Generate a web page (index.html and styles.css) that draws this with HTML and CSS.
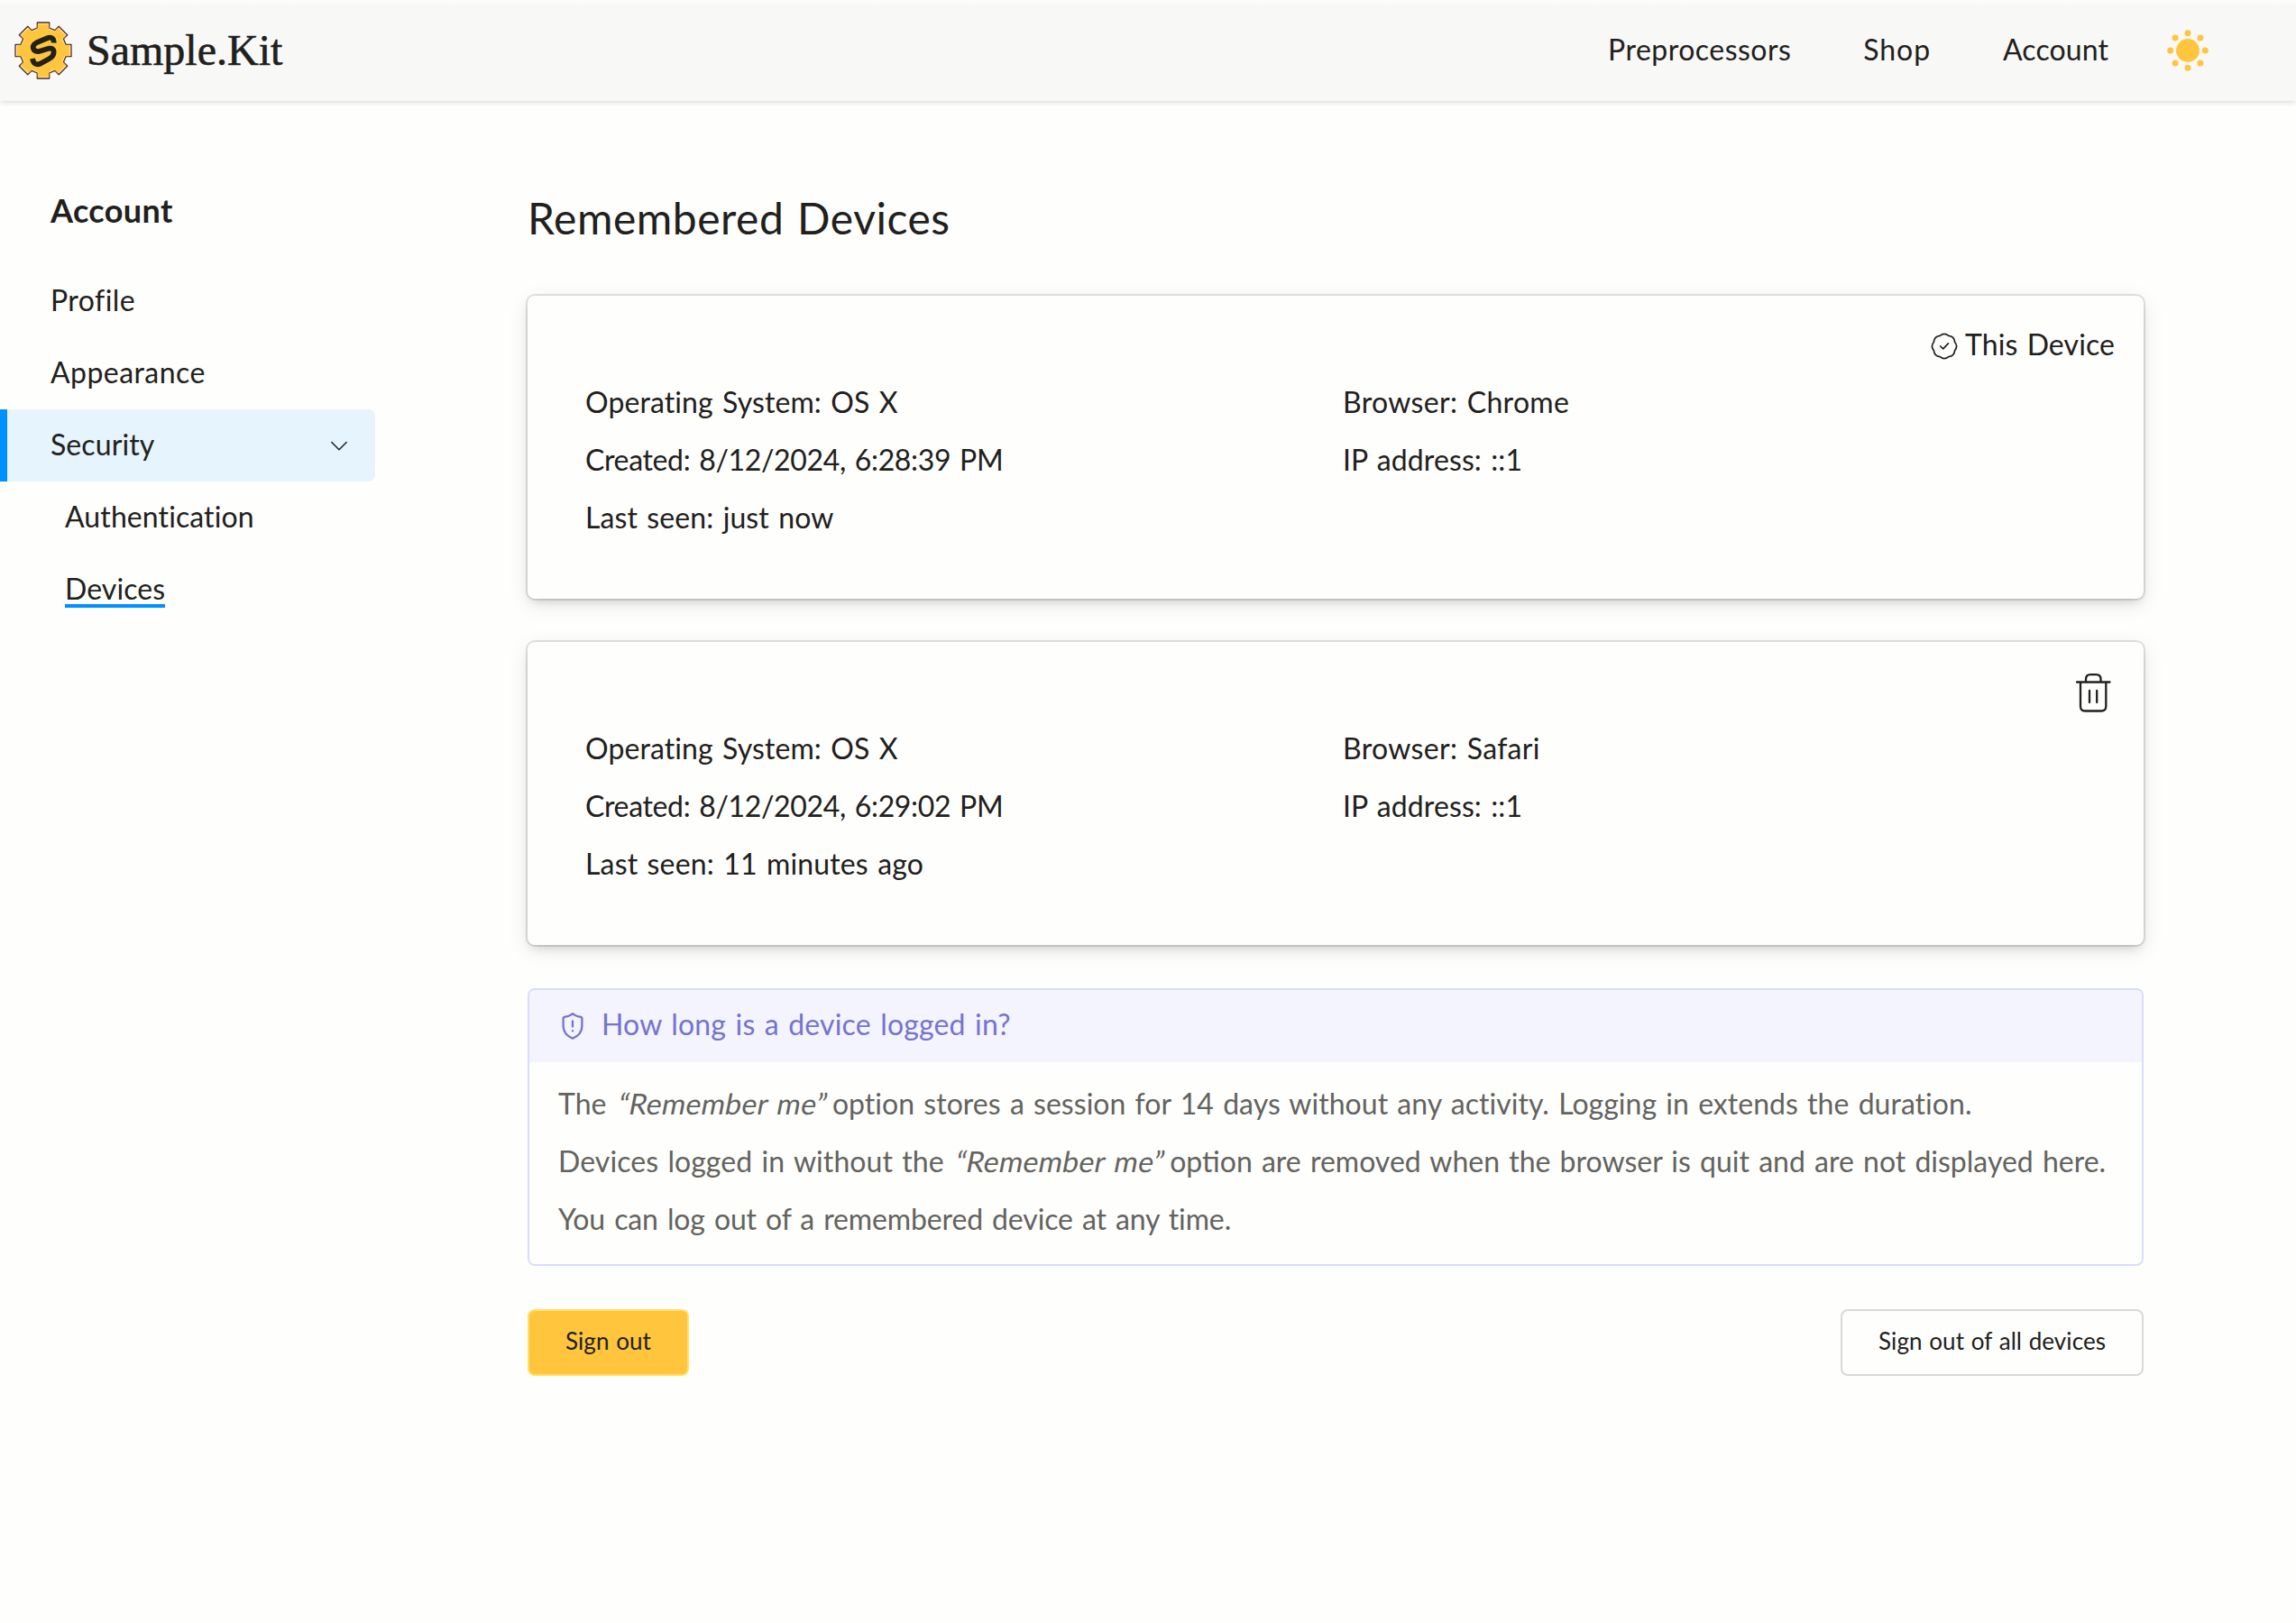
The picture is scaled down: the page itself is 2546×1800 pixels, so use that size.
FILE: index.html
```html
<!DOCTYPE html>
<html lang="en">
<head>
<meta charset="utf-8">
<title>Remembered Devices – Sample.Kit</title>
<link rel="stylesheet" href="styles.css">
</head>
<body>
<header class="topbar">
  <a class="brand">
    <svg class="brand-logo" viewBox="-32 -32 64 64">
      <defs><polygon id="gear" points="-6.7,-25 -6.7,-31 6.7,-31 6.7,-25 12.9,-22.4 17.2,-26.7 26.7,-17.2 22.4,-12.9 25,-6.7 31,-6.7 31,6.7 25,6.7 22.4,12.9 26.7,17.2 17.2,26.7 12.9,22.4 6.7,25 6.7,31 -6.7,31 -6.7,25 -12.9,22.4 -17.2,26.7 -26.7,17.2 -22.4,12.9 -25,6.7 -31,6.7 -31,-6.7 -25,-6.7 -22.4,-12.9 -26.7,-17.2 -17.2,-26.7 -12.9,-22.4"/></defs>
      <use href="#gear" fill="#ffe9c0" stroke="#4b2f22" stroke-width="1.3" stroke-linejoin="round"/>
      <use href="#gear" fill="#ffc53d" transform="scale(.94)"/>
      <path d="M11.6-8.500Q12-15.500 5-14L-7-9Q-13.5-5.500-10.200-.5Q-7.500 2-3 .6L5-2Q12.500-3.500 11.500 3Q11 7 6 9.500L-3 14.500Q-10.500 17.500-12 9" fill="none" stroke="#21201c" stroke-width="5.800"/>
    </svg>
    <span class="brand-name">Sample.Kit</span>
  </a>
  <nav class="topnav">
    <a class="nav-pre">Preprocessors</a>
    <a class="nav-shop">Shop</a>
    <a>Account</a>
    <svg class="sun" viewBox="-24 -24 48 48" fill="#ffc53d">
      <circle r="12.900"/>
      <circle cy="-19.300" r="3.500"/><circle cy="19.300" r="3.500"/><circle cx="-19.300" r="3.500"/><circle cx="19.300" r="3.500"/>
      <circle cx="13.900" cy="-13.900" r="3.500"/><circle cx="13.900" cy="13.900" r="3.500"/><circle cx="-13.900" cy="13.900" r="3.500"/><circle cx="-13.900" cy="-13.900" r="3.500"/>
    </svg>
  </nav>
</header>
<div class="layout">
  <aside class="sidebar">
    <h2>Account</h2>
    <a class="item wide">Profile</a>
    <a class="item wide">Appearance</a>
    <a class="item active">Security
      <svg class="chevron" viewBox="0 0 20 12" fill="none" stroke="#21201c" stroke-width="1.500" stroke-linecap="round" stroke-linejoin="round"><path d="M1.800 1.500 10 9.700 18.200 1.500"/></svg>
    </a>
    <a class="item sub">Authentication</a>
    <a class="item sub"><span class="current">Devices</span></a>
  </aside>
  <main class="content">
    <h1>Remembered Devices</h1>
    <section class="card">
      <div class="card-top">
        <svg class="badge" viewBox="-16 -16 32 32" fill="none" stroke="#21201c" stroke-width="1.700" stroke-linecap="round" stroke-linejoin="round"><path d="M-4.800-11.600Q0-15.600 4.800-11.600Q11-11 11.600-4.800Q15.600 0 11.600 4.800Q11 11 4.800 11.600Q0 15.600-4.800 11.600Q-11 11-11.600 4.800Q-15.600 0-11.600-4.800Q-11-11-4.800-11.600Z"/><path d="M-4.300 0-1.300 2.900 4.400-3.100"/></svg>
        <span>This Device</span>
      </div>
      <div class="facts">
        <div><p>Operating System: OS X</p><p class="stamp">Created: 8/12/2024, 6:28:39 PM</p><p>Last seen: just now</p></div>
        <div><p class="browser">Browser: Chrome</p><p>IP address: ::1</p></div>
      </div>
    </section>
    <section class="card">
      <div class="card-top">
        <svg class="trash" viewBox="0 0 48 48" fill="none" stroke="#21201c" stroke-width="2.300" stroke-linecap="round" stroke-linejoin="round"><path d="M6 11.500H42.500M10 12V38.500Q10 43.500 15 43.500H33Q38.300 43.500 38.300 38.500V12M16 11V8.500Q16 3.200 21 3.200H27.500Q32.500 3.200 32.500 8.500V11M20 21V34M28.200 21V34"/></svg>
      </div>
      <div class="facts">
        <div><p>Operating System: OS X</p><p class="stamp">Created: 8/12/2024, 6:29:02 PM</p><p class="ago">Last seen: 11 minutes ago</p></div>
        <div><p class="browser">Browser: Safari</p><p>IP address: ::1</p></div>
      </div>
    </section>
    <section class="notice">
      <div class="notice-head">
        <svg class="shield" viewBox="0 0 28 32" fill="none" stroke="#7573d0" stroke-width="2.300" stroke-linecap="round" stroke-linejoin="round"><path d="M14 2.200Q9 5.900 5.500 5.700Q3.700 6 3.600 8V16.500Q4 25.500 14 29.700Q24 25.500 24.400 16.500V8Q24.300 6 22.500 5.700Q19 5.900 14 2.200ZM14 10.500V16.500M14 21.200V21.600"/></svg>
        <span>How long is a device logged in?</span>
      </div>
      <div class="notice-body">
        <p>The <em>“Remember me”</em> option stores a session for 14 days without any activity. Logging in extends the duration.</p>
        <p class="second"><span class="lead">Devices logged in without the</span> <em>“Remember me”</em> option are removed when the browser is quit and are not displayed here.</p>
        <p class="last">You can log out of a remembered device at any time.</p>
      </div>
    </section>
    <div class="actions">
      <button class="btn primary">Sign out</button>
      <button class="btn">Sign out of all devices</button>
    </div>
  </main>
</div>
</body>
</html>
```
FILE: styles.css
```css
* { box-sizing: border-box; margin: 0; }
body {
  background: #fefefd;
  color: #21201c;
  font: 400 32px/64px Lato, "Liberation Sans", sans-serif;
  letter-spacing: .1px;
  word-spacing: 2px;
  min-height: 1800px;
}
svg { display: block; flex: none; }

.topbar {
  height: 112px;
  display: flex;
  justify-content: space-between;
  align-items: center;
  padding: 0 96px 0 16px;
  background: linear-gradient(#fdfdfc, #f8f8f7 6px);
  box-shadow: 0 1px 6px rgba(0, 0, 0, .16);
}
.brand { display: flex; align-items: center; gap: 16px; }
.brand-logo { width: 64px; height: 64px; }
.brand-name {
  font: 48px/64px "Liberation Serif", serif;
  letter-spacing: 0;
  -webkit-text-stroke: .6px #21201c;
}
.topnav { display: flex; align-items: center; gap: 80px; }
.topnav a { padding-bottom: 3px; }
.nav-pre { letter-spacing: .48px; }
.nav-shop { letter-spacing: .9px; }
.sun { width: 48px; height: 48px; margin-left: -16px; }

.layout { display: flex; }
.sidebar { width: 416px; padding-top: 89px; }
.sidebar h2 {
  font-size: 36px;
  line-height: 64px;
  padding-left: 56px;
  letter-spacing: .4px;
  margin-bottom: 29px;
}
.item {
  display: flex;
  justify-content: space-between;
  align-items: center;
  height: 80px;
  padding: 0 30px 3px 56px;
}
.item.wide { letter-spacing: .45px; }
.item.active {
  padding-left: 48px;
  border-left: 8px solid #0090ff;
  border-radius: 0 8px 8px 0;
  background: #e6f4fe;
}
.item.sub { padding-left: 72px; }
.chevron { width: 20px; height: 12px; margin-top: 4px; }
.current {
  line-height: 38px;
  height: 38px;
  box-shadow: 0 2px 0 #0090ff;
  background: linear-gradient(#0090ff, #0090ff) bottom / 100% 2px no-repeat;
}

.content { width: 1792px; margin-left: 169px; padding-top: 98px; }
h1 {
  font-size: 48px;
  font-weight: 400;
  line-height: 64px;
  letter-spacing: .52px;
  margin-bottom: 54px;
}
.card {
  height: 336px;
  margin-bottom: 48px;
  padding: 22px 32px 0 64px;
  border-radius: 8px;
  background: #fefefd;
  box-shadow: 0 0 0 2px rgba(0, 0, 0, .11), 0 6px 12px -4px rgba(0, 0, 0, .16), 0 6px 24px rgba(0, 0, 0, .09);
}
.card-top {
  display: flex;
  justify-content: flex-end;
  align-items: center;
  gap: 7px;
  height: 64px;
}
.badge { width: 32px; height: 32px; margin-top: 4px; }
.trash { width: 48px; height: 48px; margin: 6px 0 0; }
.card-top span { line-height: 60px; }
.facts { display: grid; grid-template-columns: 840px 1fr; }
.stamp { letter-spacing: -.34px; }
.ago { letter-spacing: .15px; }
.browser { letter-spacing: .32px; }

.notice {
  height: 308px;
  border: 2px solid #dadcff;
  border-radius: 8px;
  margin-bottom: 48px;
  color: #63635e;
  overflow: hidden;
}
.notice-head {
  display: flex;
  align-items: center;
  gap: 18px;
  height: 80px;
  padding-left: 34px;
  background: #f4f4fe;
  color: #7573d0;
  letter-spacing: .18px;
}
.notice-head span { padding-bottom: 4px; }
.shield { width: 28px; height: 32px; }
.notice-body { padding: 14px 32px; letter-spacing: .03px; white-space: nowrap; }
/* Slanted upright letterforms instead of the narrower true italic */
.notice-body em {
  display: inline-block;
  width: 227px;
  margin-left: 3px;
  font-style: normal;
  letter-spacing: .3px;
  transform: skewX(-11deg);
}
.second { letter-spacing: 0; }
.lead { letter-spacing: .08px; }
.last { letter-spacing: -.12px; }

.actions { display: flex; justify-content: space-between; }
.btn {
  height: 74px;
  padding: 0 40px 4px;
  border: 2px solid #dad9d6;
  border-radius: 8px;
  background: #fefefd;
  color: #21201c;
  font: 400 26px/40px Lato, "Liberation Sans", sans-serif;
  letter-spacing: .06px;
  word-spacing: 1px;
}
.btn.primary { background: #ffc53d; border-color: #ffe066; }
```
